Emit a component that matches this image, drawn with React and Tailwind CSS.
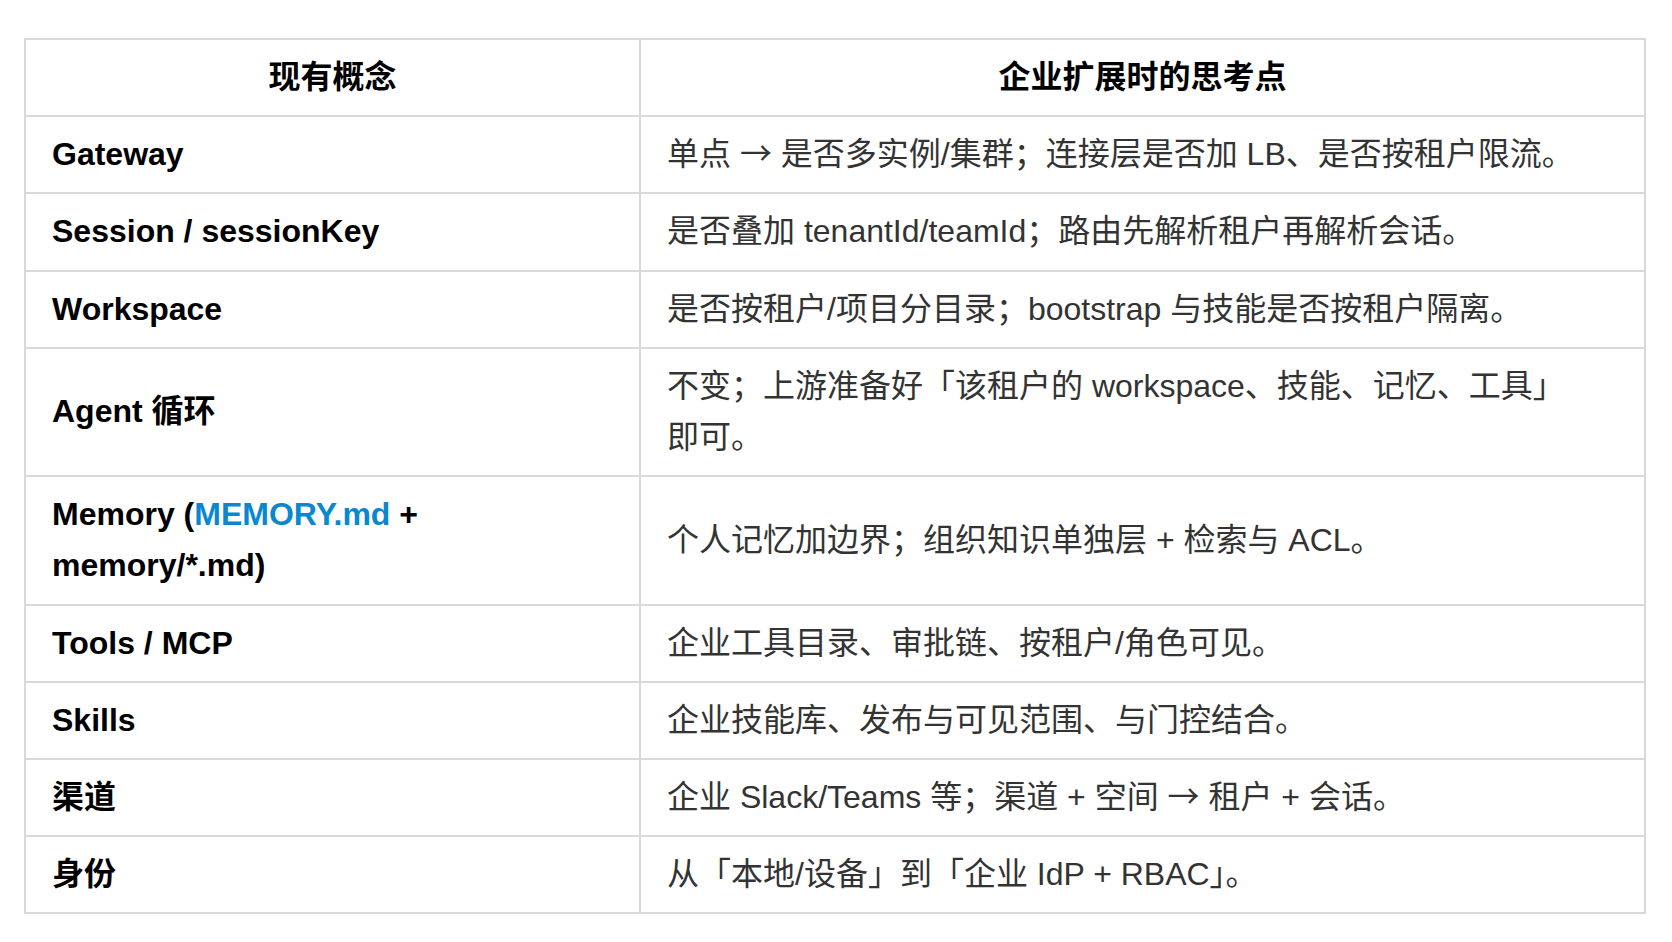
import React from "react";

const Arrow = () => (
  <span className="leading-none" style={{ fontFamily: '"Noto Sans CJK SC", sans-serif' }}>→</span>
);

const ROWS = [
  { name: "Gateway", note: <>单点 <Arrow /> 是否多实例/集群；连接层是否加 LB、是否按租户限流。</> },
  { name: "Session / sessionKey", note: "是否叠加 tenantId/teamId；路由先解析租户再解析会话。" },
  { name: "Workspace", note: "是否按租户/项目分目录；bootstrap 与技能是否按租户隔离。" },
  {
    name: "Agent 循环",
    note: <>不变；上游准备好「该租户的 workspace、技能、记忆、工具」<span className="whitespace-nowrap">即可。</span></>,
  },
  {
    name: (
      <>
        Memory (<span className="text-[#0a88cf]">MEMORY.md</span> + memory/*.md)
      </>
    ),
    note: "个人记忆加边界；组织知识单独层 + 检索与 ACL。",
  },
  { name: "Tools / MCP", note: "企业工具目录、审批链、按租户/角色可见。" },
  { name: "Skills", note: "企业技能库、发布与可见范围、与门控结合。" },
  { name: "渠道", note: <>企业 Slack/Teams 等；渠道 + 空间 <Arrow /> 租户 + 会话。</> },
  { name: "身份", note: "从「本地/设备」到「企业 IdP + RBAC」。" },
];

const font = { fontFamily: '"Liberation Sans", "Noto Sans CJK SC", sans-serif' };

export default function App() {
  return (
    <div className="min-h-screen bg-white pt-[38px] px-[24px]" style={font}>
      <table className="w-[1622px] table-fixed border-collapse text-[32px] leading-[1.6]">
        <colgroup>
          <col className="w-[615px]" />
          <col />
        </colgroup>
        <thead>
          <tr>
            <th className="border-2 border-[#d9d9d9] px-[26px] py-[12px] text-center font-bold text-black">现有概念</th>
            <th className="border-2 border-[#d9d9d9] px-[26px] py-[12px] text-center font-bold text-black">企业扩展时的思考点</th>
          </tr>
        </thead>
        <tbody>
          {ROWS.map((row, i) => (
            <tr key={i}>
              <td className="border-2 border-[#d9d9d9] px-[26px] py-[12px] font-bold text-black align-middle">{row.name}</td>
              <td className="border-2 border-[#d9d9d9] px-[26px] py-[12px] text-[#333333] align-middle">{row.note}</td>
            </tr>
          ))}
        </tbody>
      </table>
    </div>
  );
}
